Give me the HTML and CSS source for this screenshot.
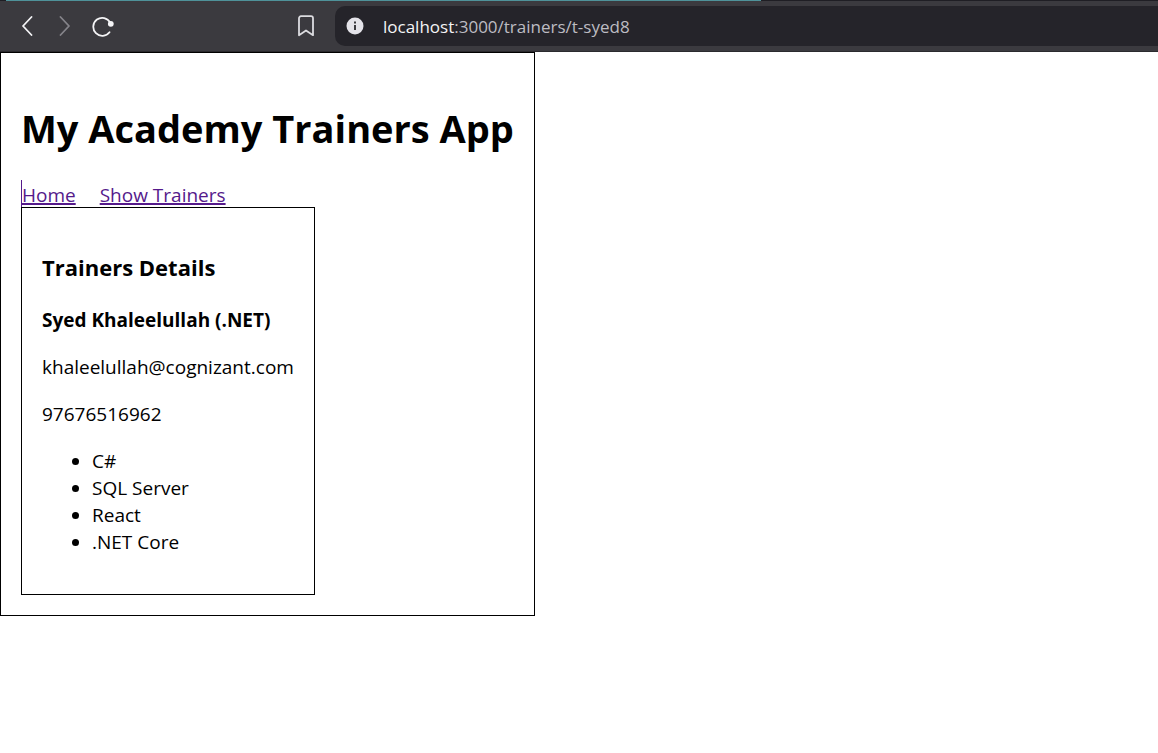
FILE: index.html
```html
<!DOCTYPE html>
<html lang="en">
<head>
<meta charset="utf-8">
<title>My Academy Trainers App</title>
<link rel="stylesheet" href="styles.css">
</head>
<body>
<header class="browser-bar">
  <div class="load-track"><div class="load-progress"></div></div>
  <div class="toolbar">
    <button class="tool back" aria-label="Back"><svg width="12" height="20" viewBox="0 0 12 20"><path d="M10.500 1 2 10l8.500 9" /></svg></button>
    <button class="tool forward" aria-label="Forward" disabled><svg width="12" height="20" viewBox="0 0 12 20"><path d="M1.500 1 10 10l-8.500 9" /></svg></button>
    <button class="tool reload" aria-label="Reload"><svg width="22" height="22" viewBox="0 0 22 22"><path d="M18.200 7.500A9 9 0 1 0 17.500 17.200" /><circle cx="18.800" cy="8.800" r="2.900" /></svg></button>
    <button class="tool bookmark" aria-label="Bookmark"><svg width="18" height="22" viewBox="0 0 18 22"><path d="M4 1.200h10a2 2 0 0 1 2 2v17L9 15.500 2 20.200v-17a2 2 0 0 1 2-2Z" /></svg></button>
    <div class="address">
      <svg class="info" width="18" height="18" viewBox="0 0 18 18"><circle cx="9" cy="9" r="8.500" /><path d="M8 8h2v5H8zM8 4.500h2v2H8z" /></svg>
      <span class="url"><span class="host">localhost</span>:3000/trainers/t-syed8</span>
    </div>
  </div>
</header>
<main class="app">
  <h1 class="app-title">My Academy Trainers App</h1>
  <nav class="app-nav">
    <a class="home-link" href="#home">Home</a>
    <a href="#trainers">Show Trainers</a>
  </nav>
  <section class="card">
    <h3 class="card-title">Trainers Details</h3>
    <h4 class="trainer-name">Syed Khaleelullah (.NET)</h4>
    <p class="detail">khaleelullah@cognizant.com</p>
    <p class="detail">97676516962</p>
    <ul class="skills">
      <li>C#</li>
      <li>SQL Server</li>
      <li>React</li>
      <li>.NET Core</li>
    </ul>
  </section>
</main>
</body>
</html>
```
FILE: styles.css
```css
body {
  margin: 0;
  background: #fff;
  color: #000;
  font: 19px/27px "Segoe UI", "Open Sans", "Noto Sans", sans-serif;
}

.browser-bar {
  background: #3b3a3f;
  border-bottom: 1px solid #2b2a2e;
}

.load-track {
  height: 1px;
  padding-left: 6px;
  background: #1f1e24;
}

.load-progress {
  width: 65.5%;
  height: 1px;
  background: #4f929a;
}

.toolbar {
  display: flex;
  align-items: center;
  height: 50px;
  padding-left: 16px;
}

.tool {
  display: flex;
  align-items: center;
  justify-content: center;
  width: 22px;
  height: 32px;
  margin-right: 16px;
  padding: 0;
  border: 0;
  background: none;
}

.tool svg,
.info {
  display: block;
  flex: none;
}

.tool path {
  fill: none;
  stroke: #f4f4f6;
  stroke-width: 1.8;
  stroke-linecap: round;
  stroke-linejoin: round;
}

.tool circle {
  fill: #f4f4f6;
}

.forward path {
  stroke: #85848a;
}

.bookmark {
  margin-left: 165px;
  margin-right: 18px;
}

.bookmark path {
  stroke: #dcdce0;
}

.address {
  display: flex;
  flex: 1;
  align-items: center;
  gap: 19px;
  height: 40px;
  padding-left: 11px;
  border-radius: 10px 0 0 10px;
  background: #25242a;
}

.info circle {
  fill: #e4e3e9;
}

.info path {
  fill: #3b3a3f;
}

.url {
  color: #bdbcc2;
  font-size: 17px;
}

.host {
  color: #f4f4f6;
}

.app {
  width: fit-content;
  padding: 20px;
  border: 1px solid #000;
}

.app-title {
  margin: 29px 0 25px;
  font-size: 38px;
  line-height: 53px;
}

.app-nav {
  display: flex;
  gap: 24px;
}

.app-nav a {
  padding-top: 3px;
  color: #551a8b;
  line-height: 24px;
  text-decoration-thickness: 2px;
}

.home-link {
  border-left: 1px solid #551a8b;
}

.card {
  width: fit-content;
  padding: 20px;
  border: 1px solid #000;
}

.card-title {
  margin: 24px 0;
  font-size: 22px;
  line-height: 31px;
}

.trainer-name,
.detail {
  margin: 20px 0;
}

.trainer-name {
  font-size: 19px;
}

.skills {
  margin: 20px 0 18px;
  padding-left: 50px;
}
```
